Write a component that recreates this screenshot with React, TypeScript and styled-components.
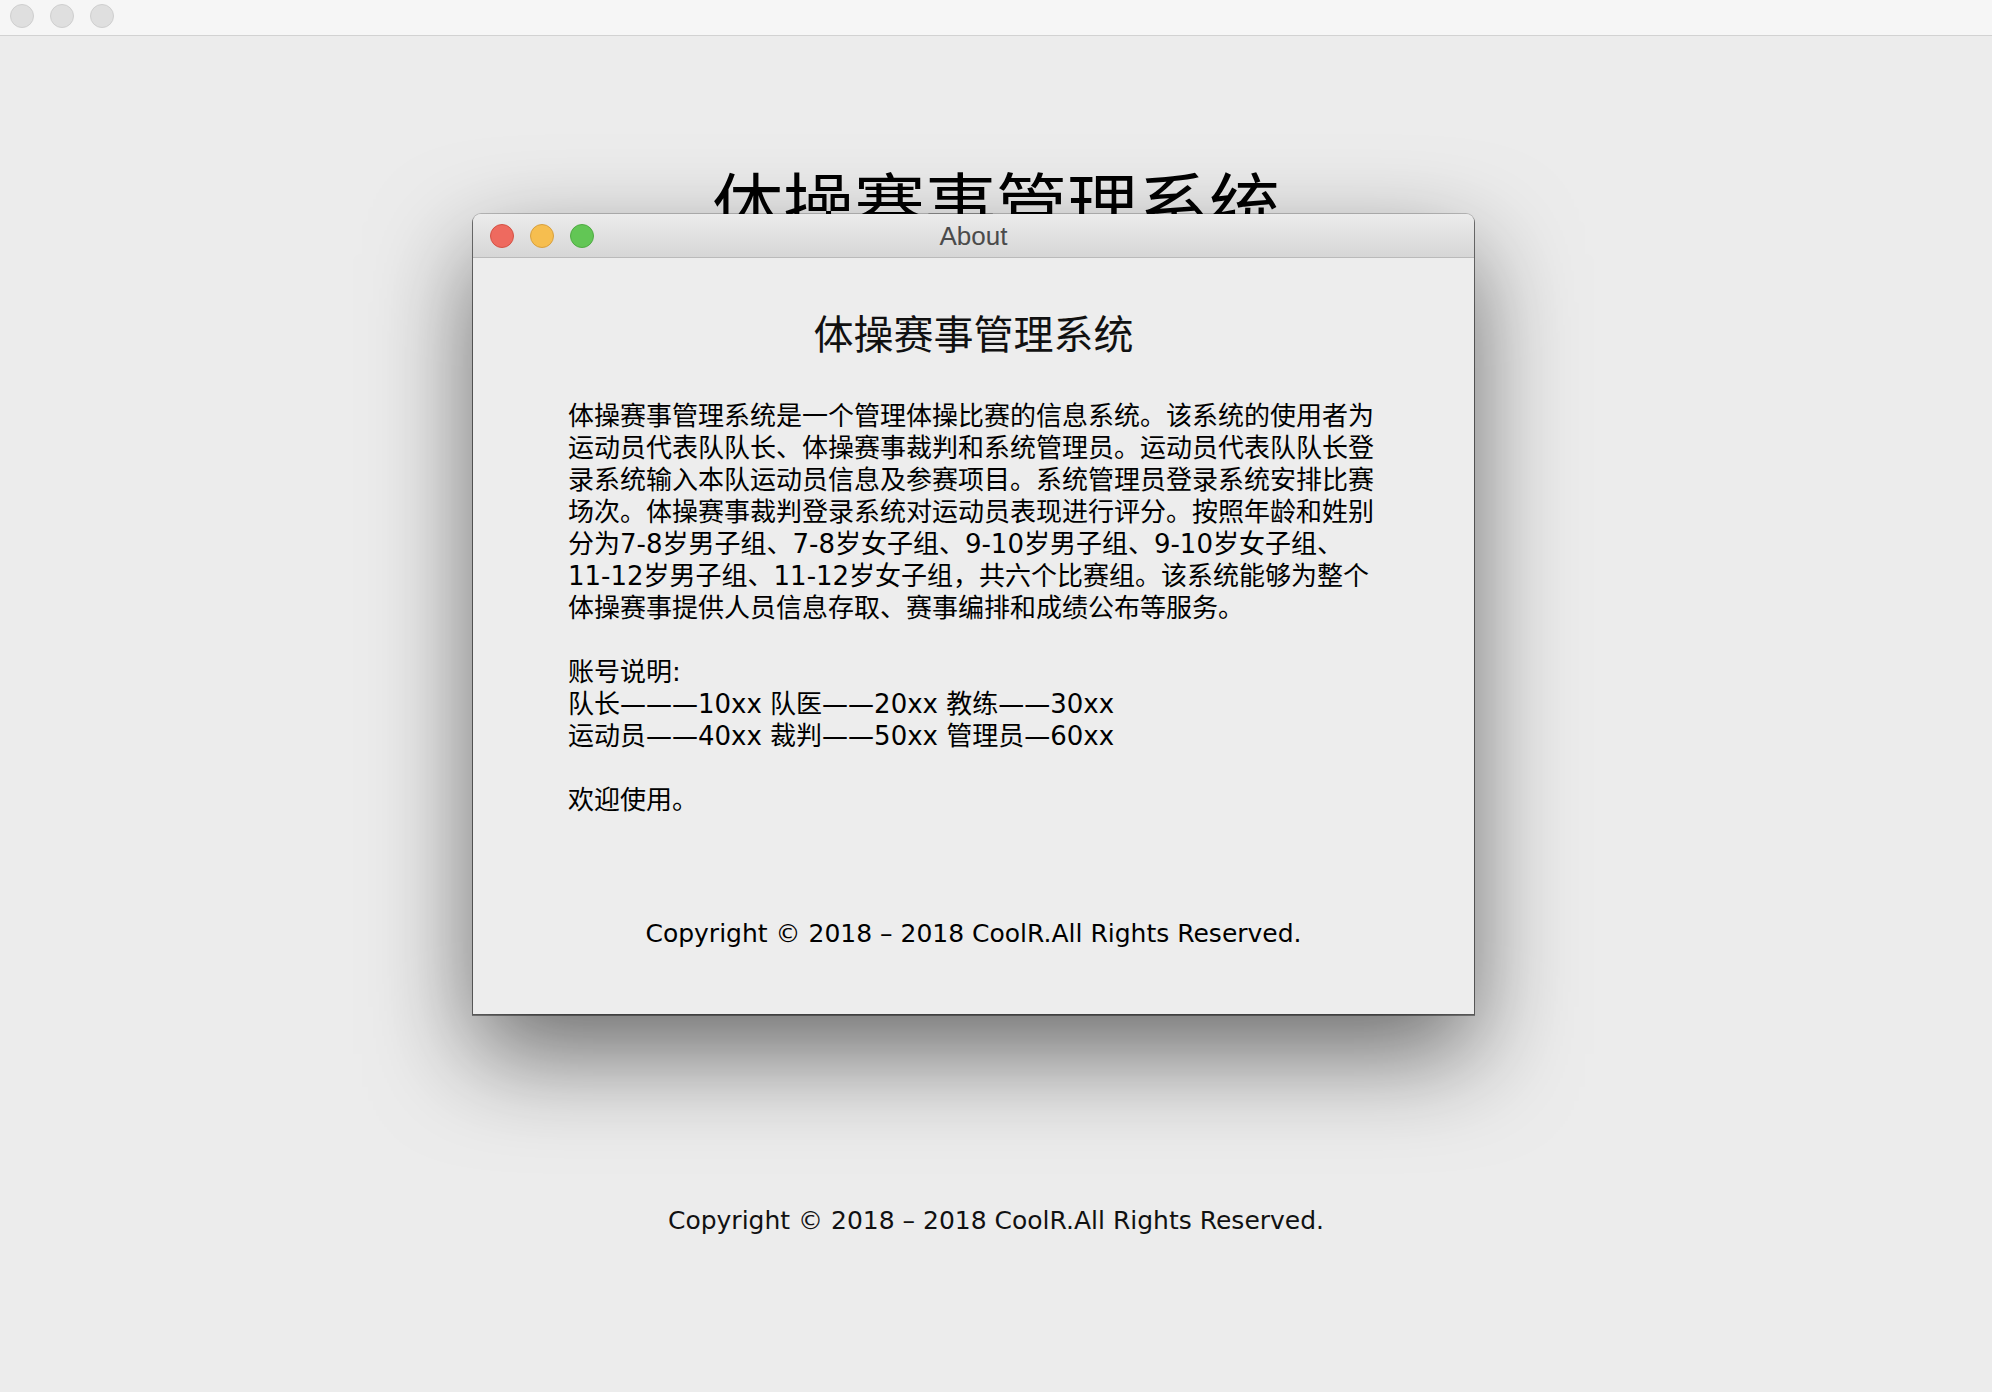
import React from "react";
import styled, { createGlobalStyle } from "styled-components";

const GlobalStyle = createGlobalStyle`
  html, body {
    margin: 0;
    padding: 0;
    background: #ececec;
  }
  body {
    font-family: "DejaVu Sans", "Noto Sans CJK SC", sans-serif;
    color: #000;
  }
`;

const Page = styled.div`
  position: relative;
  width: 1992px;
  height: 1392px;
  overflow: hidden;
  display: flex;
  flex-direction: column;
  background: #ececec;
`;

const TopBar = styled.div`
  height: 36px;
  box-sizing: border-box;
  background: #f6f6f6;
  border-bottom: 1px solid #d2d2d2;
  display: flex;
  align-items: flex-start;
  padding: 4px 0 0 10px;
  gap: 16px;
`;

const InactiveLight = styled.span`
  width: 24px;
  height: 24px;
  border-radius: 50%;
  background: #dfdfdf;
  border: 1px solid #cfcfcf;
  box-sizing: border-box;
`;

const MainTitle = styled.h1`
  margin: 130px 0 0;
  font-family: "Noto Sans CJK SC", sans-serif;
  font-weight: 400;
  font-size: 71px;
  line-height: 71px;
  text-align: center;
  color: #000;
`;

const PageFooter = styled.div`
  margin-top: 968px;
  font-family: "DejaVu Sans", sans-serif;
  font-size: 25px;
  line-height: 32px;
  text-align: center;
  color: #111;
`;

const AboutWindow = styled.div`
  position: absolute;
  left: 473px;
  top: 214px;
  width: 1001px;
  height: 800px;
  display: flex;
  flex-direction: column;
  background: #ededed;
  border-radius: 8px 8px 0 0;
  box-shadow: 0 0 0 1px rgba(0, 0, 0, 0.2), 0 1px 0 1px rgba(0, 0, 0, 0.4),
    0 40px 100px rgba(0, 0, 0, 0.55);
`;

const TitleBar = styled.div`
  height: 44px;
  box-sizing: border-box;
  display: grid;
  grid-template-columns: 1fr auto 1fr;
  align-items: center;
  padding: 0 17px;
  border-bottom: 1px solid #bababa;
  border-radius: 8px 8px 0 0;
  background: linear-gradient(#ececec, #d6d6d6);
`;

const Lights = styled.div`
  display: flex;
  gap: 16px;
`;

const TrafficLight = styled.span<{ $fill: string; $edge: string }>`
  width: 24px;
  height: 24px;
  border-radius: 50%;
  box-sizing: border-box;
  background: ${(p) => p.$fill};
  border: 1px solid ${(p) => p.$edge};
`;

const WindowTitle = styled.div`
  font-family: "Liberation Sans", sans-serif;
  font-size: 26px;
  color: #4b4b4b;
  line-height: 44px;
`;

const WindowBody = styled.div`
  flex: 1;
  display: flex;
  flex-direction: column;
  padding-top: 54px;
`;

const AboutHeading = styled.h2`
  margin: 0;
  font-family: "Noto Sans CJK SC", sans-serif;
  font-weight: 400;
  font-size: 40px;
  line-height: 40px;
  text-align: center;
  color: #111;
`;

const Description = styled.div`
  margin-top: 48px;
  padding-left: 95px;
  font-family: "DejaVu Sans", "Noto Sans CJK SC", sans-serif;
  font-size: 26px;
  line-height: 32px;
  white-space: pre;
  color: #000;
`;

const WindowCopyright = styled.div`
  margin-top: 102px;
  font-family: "DejaVu Sans", sans-serif;
  font-size: 25px;
  line-height: 32px;
  text-align: center;
  color: #000;
`;

const descriptionLines = [
  "体操赛事管理系统是一个管理体操比赛的信息系统。该系统的使用者为",
  "运动员代表队队长、体操赛事裁判和系统管理员。运动员代表队队长登",
  "录系统输入本队运动员信息及参赛项目。系统管理员登录系统安排比赛",
  "场次。体操赛事裁判登录系统对运动员表现进行评分。按照年龄和姓别",
  "分为7-8岁男子组、7-8岁女子组、9-10岁男子组、9-10岁女子组、",
  "11-12岁男子组、11-12岁女子组，共六个比赛组。该系统能够为整个",
  "体操赛事提供人员信息存取、赛事编排和成绩公布等服务。",
  "",
  "账号说明:",
  "队长———10xx 队医——20xx 教练——30xx",
  "运动员——40xx 裁判——50xx 管理员—60xx",
  "",
  "欢迎使用。",
];

const copyright = "Copyright © 2018 – 2018 CoolR.All Rights Reserved.";

export default function App() {
  return (
    <>
      <GlobalStyle />
      <Page>
        <TopBar>
          <InactiveLight />
          <InactiveLight />
          <InactiveLight />
        </TopBar>
        <MainTitle>体操赛事管理系统</MainTitle>
        <PageFooter>{copyright}</PageFooter>

        <AboutWindow>
          <TitleBar>
            <Lights>
              <TrafficLight $fill="#ee6a5f" $edge="#d45245" />
              <TrafficLight $fill="#f6be4f" $edge="#d8a03f" />
              <TrafficLight $fill="#62c655" $edge="#4fab43" />
            </Lights>
            <WindowTitle>About</WindowTitle>
            <span />
          </TitleBar>
          <WindowBody>
            <AboutHeading>体操赛事管理系统</AboutHeading>
            <Description>{descriptionLines.join("\n")}</Description>
            <WindowCopyright>{copyright}</WindowCopyright>
          </WindowBody>
        </AboutWindow>
      </Page>
    </>
  );
}
